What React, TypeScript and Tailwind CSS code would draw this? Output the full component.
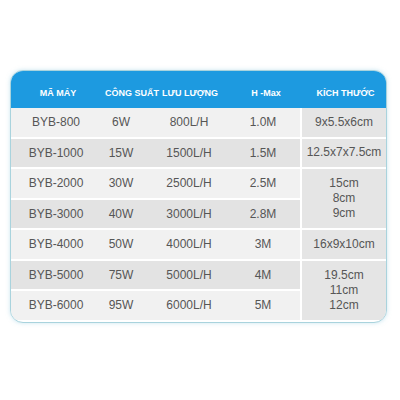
import React from "react";

type Row = { m: string; p: string; f: string; h: string };

const rows: Row[] = [
  { m: "BYB-800", p: "6W", f: "800L/H", h: "1.0M" },
  { m: "BYB-1000", p: "15W", f: "1500L/H", h: "1.5M" },
  { m: "BYB-2000", p: "30W", f: "2500L/H", h: "2.5M" },
  { m: "BYB-3000", p: "40W", f: "3000L/H", h: "2.8M" },
  { m: "BYB-4000", p: "50W", f: "4000L/H", h: "3M" },
  { m: "BYB-5000", p: "75W", f: "5000L/H", h: "4M" },
  { m: "BYB-6000", p: "95W", f: "6000L/H", h: "5M" },
];

const sizes: { lines: string[]; span: number }[] = [
  { lines: ["9x5.5x6cm"], span: 1 },
  { lines: ["12.5x7x7.5cm"], span: 1 },
  { lines: ["15cm", "8cm", "9cm"], span: 2 },
  { lines: ["16x9x10cm"], span: 1 },
  { lines: ["19.5cm", "11cm", "12cm"], span: 2 },
];

export default function App() {
  const cells: React.ReactNode[] = [];
  let sizeIdx = 0;
  let covered = 0;
  rows.forEach((r, i) => {
    const bg = i % 2 === 0 ? "bg-[#f1f1f1]" : "bg-[#e3e3e3]";
    cells.push(
      <div key={`m${i}`} className={`${bg} flex items-center justify-center`}>{r.m}</div>,
      <div key={`p${i}`} className={`${bg} flex items-center justify-center`}>{r.p}</div>,
      <div key={`f${i}`} className={`${bg} flex items-center justify-center`}>{r.f}</div>,
      <div key={`h${i}`} className={`${bg} flex items-center justify-center pr-[11px]`}>{r.h}</div>
    );
    if (covered > 0) {
      covered--;
    } else {
      const s = sizes[sizeIdx++];
      cells.push(
        <div
          key={`s${i}`}
          className={`ml-[2px] bg-[#e5e5e5] flex flex-col items-center justify-center leading-[15px] ${s.span === 2 ? "row-span-2" : ""}`}
        >
          {s.lines.map((l) => (
            <span key={l}>{l}</span>
          ))}
        </div>
      );
      covered = s.span - 1;
    }
  });

  return (
    <div className="w-[400px] h-[400px] bg-white pt-[70px] pl-[10px]">
      <div className="w-[377px] rounded-[13px] border border-[#a9d3dd] overflow-hidden bg-white shadow-[0_0_4px_rgba(150,205,225,0.5)]">
        <div
          className="h-[37px] bg-[#1d9ae0] flex pt-[8px] items-center text-white font-bold text-[9px] whitespace-nowrap"
          style={{ fontFamily: '"Liberation Sans", Arial, sans-serif' }}
        >
          <div className="w-[94px] text-center">MÃ MÁY</div>
          <div className="w-[48px] text-center">CÔNG SUẤT</div>
          <div className="w-[74px] text-center">LƯU LƯỢNG</div>
          <div className="w-[78px] text-center">H -Max</div>
          <div className="w-[81px] text-center">KÍCH THƯỚC</div>
        </div>
        <div
          className="grid grid-cols-[90px_40px_96px_63px_86px] grid-rows-[repeat(7,28.5px)] gap-y-[2px] pb-[2px] text-[12px] text-[#565656] whitespace-nowrap"
          style={{ fontFamily: '"Liberation Sans", Arial, sans-serif' }}
        >
          {cells}
        </div>
      </div>
    </div>
  );
}
